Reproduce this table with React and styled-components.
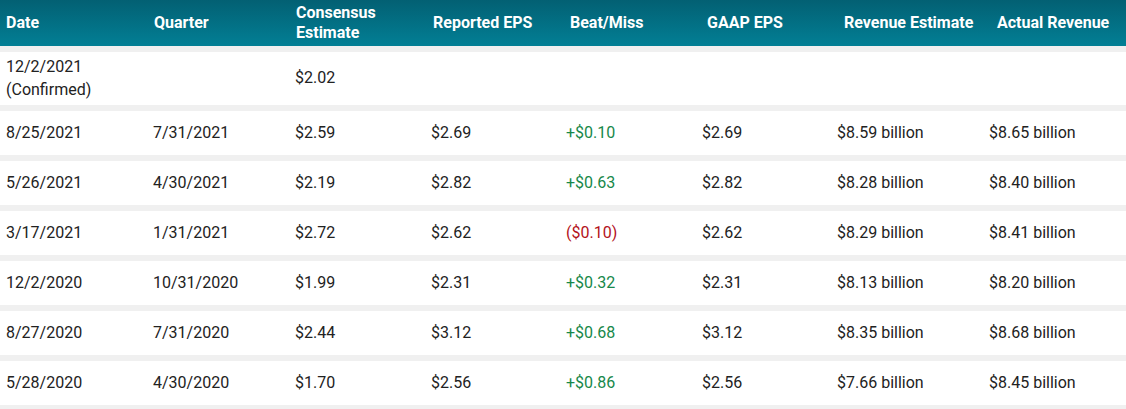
import React from "react"
import styled, { createGlobalStyle } from "styled-components"

const GlobalStyle = createGlobalStyle`
  body {
    margin: 0;
    background: #f0f0f0;
    font-family: Roboto, "Liberation Sans", Arial, sans-serif;
  }
`

const headCols = "148px 142px 137px 137px 137px 137px 153px 1fr"
const bodyCols = "147px 142px 136px 135px 136px 135px 152px 1fr"

const Table = styled.div`
  width: 1126px;
  display: flex;
  flex-direction: column;
  gap: 6px;
  padding-bottom: 4px;
  background: #f0f0f0;
`

const HeadRow = styled.div`
  display: grid;
  grid-template-columns: ${headCols};
  height: 46px;
  background: linear-gradient(to bottom, #036073, #027f95);
`

const HeadCell = styled.div`
  display: flex;
  align-items: center;
  padding: 0 6px;
  color: #fff;
  font-size: 16px;
  font-weight: 700;
  line-height: 20px;
`

const Row = styled.div`
  display: grid;
  grid-template-columns: ${bodyCols};
  min-height: 44px;
  background: #fff;
`

const Cell = styled.div`
  display: flex;
  align-items: center;
  padding: 4px 6px;
  font-size: 16px;
  line-height: 22.5px;
  color: ${(p) => (p.tone === "up" ? "#17884a" : p.tone === "down" ? "#b3121b" : "#222")};
`

const headers = [
  "Date",
  "Quarter",
  <>Consensus<br />Estimate</>,
  "Reported EPS",
  "Beat/Miss",
  "GAAP EPS",
  "Revenue Estimate",
  "Actual Revenue",
]

const rows = [
  [<>12/2/2021<br />(Confirmed)</>, "", "$2.02", "", "", "", "", ""],
  ["8/25/2021", "7/31/2021", "$2.59", "$2.69", "+$0.10", "$2.69", "$8.59 billion", "$8.65 billion"],
  ["5/26/2021", "4/30/2021", "$2.19", "$2.82", "+$0.63", "$2.82", "$8.28 billion", "$8.40 billion"],
  ["3/17/2021", "1/31/2021", "$2.72", "$2.62", "($0.10)", "$2.62", "$8.29 billion", "$8.41 billion"],
  ["12/2/2020", "10/31/2020", "$1.99", "$2.31", "+$0.32", "$2.31", "$8.13 billion", "$8.20 billion"],
  ["8/27/2020", "7/31/2020", "$2.44", "$3.12", "+$0.68", "$3.12", "$8.35 billion", "$8.68 billion"],
  ["5/28/2020", "4/30/2020", "$1.70", "$2.56", "+$0.86", "$2.56", "$7.66 billion", "$8.45 billion"],
]

const toneOf = (value, i) => {
  if (i !== 4 || !value) return undefined
  return value.startsWith("(") ? "down" : "up"
}

export default function App() {
  return (
    <>
      <GlobalStyle />
      <Table>
        <HeadRow>
          {headers.map((h, i) => (
            <HeadCell key={i}>{h}</HeadCell>
          ))}
        </HeadRow>
        {rows.map((row, r) => (
          <Row key={r}>
            {row.map((v, i) => (
              <Cell key={i} tone={typeof v === "string" ? toneOf(v, i) : undefined}>
                {v}
              </Cell>
            ))}
          </Row>
        ))}
      </Table>
    </>
  )
}
